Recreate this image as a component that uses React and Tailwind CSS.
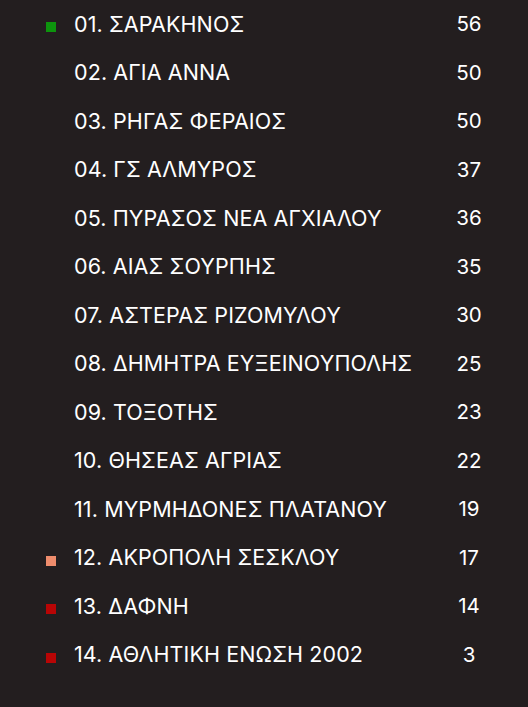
export default function App() {
  const rows = [
    ["01. ΣΑΡΑΚΗΝΟΣ", "56", "bg-[#0d940d]"],
    ["02. ΑΓΙΑ ΑΝΝΑ", "50", ""],
    ["03. ΡΗΓΑΣ ΦΕΡΑΙΟΣ", "50", ""],
    ["04. ΓΣ ΑΛΜΥΡΟΣ", "37", ""],
    ["05. ΠΥΡΑΣΟΣ ΝΕΑ ΑΓΧΙΑΛΟΥ", "36", ""],
    ["06. ΑΙΑΣ ΣΟΥΡΠΗΣ", "35", ""],
    ["07. ΑΣΤΕΡΑΣ ΡΙΖΟΜΥΛΟΥ", "30", ""],
    ["08. ΔΗΜΗΤΡΑ ΕΥΞΕΙΝΟΥΠΟΛΗΣ", "25", ""],
    ["09. ΤΟΞΟΤΗΣ", "23", ""],
    ["10. ΘΗΣΕΑΣ ΑΓΡΙΑΣ", "22", ""],
    ["11. ΜΥΡΜΗΔΟΝΕΣ ΠΛΑΤΑΝΟΥ", "19", ""],
    ["12. ΑΚΡΟΠΟΛΗ ΣΕΣΚΛΟΥ", "17", "bg-[#ee8c6c]"],
    ["13. ΔΑΦΝΗ", "14", "bg-[#b80505]"],
    ["14. ΑΘΛΗΤΙΚΗ ΕΝΩΣΗ 2002", "3", "bg-[#b80505]"],
  ];
  return (
    <div className="w-[528px] h-[707px] bg-[#231e1f] text-white font-['Inter',sans-serif]">
      {rows.map(([name, pts, c], i) => (
        <div key={i} className="flex items-center h-[48.5px]">
          <div className="w-[74px] flex justify-start pl-[46px] pt-[6px]">
            {c && <div className={`w-[10px] h-[10px] ${c}`} />}
          </div>
          <div className="flex-1 text-[21.5px] leading-none tracking-[0.1px]">{name}</div>
          <div className="w-[30px] text-center text-[20.5px] leading-none mr-[44px]">{pts}</div>
        </div>
      ))}
    </div>
  );
}
